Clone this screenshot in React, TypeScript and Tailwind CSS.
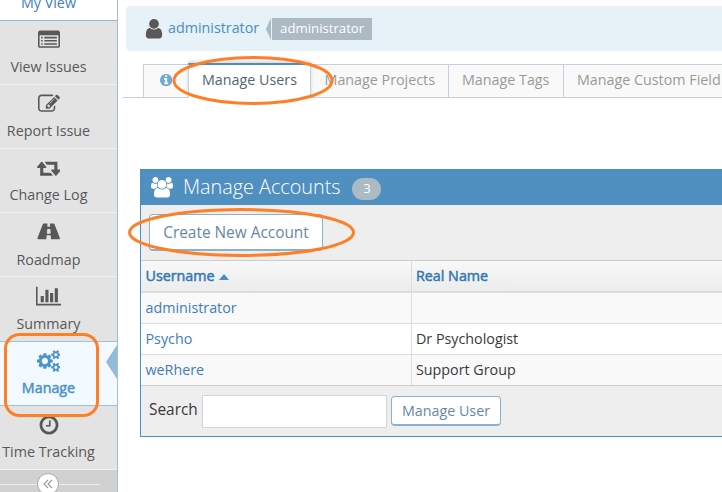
import type { ReactNode } from "react";

type GlyphProps = { d: string; box: string; className: string };

function Glyph({ d, box, className }: GlyphProps) {
  return (
    <svg viewBox={box} className={`block shrink-0 ${className}`} fill="currentColor" aria-hidden="true">
      <path d={d} />
    </svg>
  );
}

const LIST_ALT =
  "M256 1152h128v128h-128zM256 896h128v128h-128zM256 640h128v128h-128zM512 1152h1024v128h-1024zM512 896h1024v128h-1024zM512 640h1024v128h-1024zM1664 1376v-832q0-13-9.500-22.500t-22.500-9.500h-1472q-13 0-22.500 9.500t-9.500 22.500v832q0 13 9.500 22.500t22.500 9.500h1472q13 0 22.500-9.500t9.500-22.500zM1792 288v1088q0 66-47 113t-113 47h-1472q-66 0-113-47t-47-113v-1088q0-66 47-113t113-47h1472q66 0 113 47t47 113z";
const PENCIL =
  "M888 1184l116-116-152-152-116 116v56h96v96h56zm440-720q-16-16-33 1l-350 350q-17 17-1 33t33-1l350-350q17-17 1-33zm80 594v190q0 119-84.5 203.5t-203.5 84.5h-832q-119 0-203.5-84.5t-84.5-203.5v-832q0-119 84.5-203.5t203.5-84.5h832q63 0 117 25 15 7 18 23 3 17-9 29l-49 49q-14 14-32 8-23-6-45-6h-832q-66 0-113 47t-47 113v832q0 66 47 113t113 47h832q66 0 113-47t47-113v-126q0-13 9-22l64-64q15-15 35-7t20 29zm-96-738l288 288-672 672h-288v-288zm444 132l-92 92-288-288 92-92q28-28 68-28t68 28l152 152q28 28 28 68t-28 68z";
const RETWEET =
  "M1280 1504q0 13-9.5 22.5t-22.5 9.5h-960q-8 0-13.5-2t-9-7-5.5-8-3-11.5-1-11.5v-600h-192q-26 0-45-19t-19-45q0-24 15-41l320-384q19-22 49-22t49 22l320 384q15 17 15 41 0 26-19 45t-45 19h-192v384h576q16 0 25 11l160 192q7 10 7 21zm640-416q0 24-15 41l-320 384q-20 23-49 23t-49-23l-320-384q-15-17-15-41 0-26 19-45t45-19h192v-384h-576q-16 0-25-12l-160-192q-7-9-7-20 0-13 9.5-22.5t22.5-9.5h960q8 0 13.5 2t9 7 5.5 8 3 11.5 1 11.5v600h192q26 0 45 19t19 45z";
const ROAD =
  "M1111 1004v-4l-24-320q-1-13-11-22.5t-23-9.5h-186q-13 0-23 9.5t-11 22.5l-24 320v4q-1 12 8 20t21 8h244q12 0 21-8t8-20zm749 407q0 73-46 73h-704q13 0 22-9.5t8-22.5l-20-256q-1-13-11-22.5t-23-9.5h-272q-13 0-23 9.5t-11 22.5l-20 256q-1 13 8 22.5t22 9.500h-704q-46 0-46-73 0-54 26-116l417-1044q8-19 26-33t38-14h339q-13 0-23 9.5t-11 22.5l-15 192q-1 14 8 23t22 9h166q13 0 22-9t8-23l-15-192q-1-13-11-22.5t-23-9.500h339q20 0 38 14t26 33l417 1044q26 62 26 116z";
const BARS =
  "M640 896v512h-256v-512h256zm384-512v1024h-256v-1024h256zm1024 1152v128h-2048v-1536h128v1408h1920zm-640-896v768h-256v-768h256zm384-384v1152h-256v-1152h256z";
const COGS =
  "M896 896q0-106-75-181t-181-75-181 75-75 181 75 181 181 75 181-75 75-181zm768 512q0-52-38-90t-90-38-90 38-38 90q0 53 37.5 90.5t90.5 37.5 90.5-37.5 37.5-90.5zm0-1024q0-52-38-90t-90-38-90 38-38 90q0 53 37.5 90.5t90.5 37.5 90.5-37.5 37.5-90.5zm-384 421v185q0 10-7 19.5t-16 10.5l-155 24q-11 35-32 76 34 48 90 115 7 11 7 20 0 12-7 19-23 30-82.5 89.5t-78.5 59.5q-11 0-21-7l-115-90q-37 19-77 31-11 108-23 155-7 24-30 24h-186q-11 0-20-7.5t-10-17.5l-23-153q-34-10-75-31l-118 89q-7 7-20 7-11 0-21-8-144-133-144-160 0-9 7-19 10-14 41-53t47-61q-23-44-35-82l-152-24q-10-1-17-9.5t-7-19.5v-185q0-10 7-19.5t16-10.5l155-24q11-35 32-76-34-48-90-115-7-11-7-20 0-12 7-20 22-30 82-89t79-59q11 0 21 7l115 90q34-18 77-32 11-108 23-154 7-24 30-24h186q11 0 20 7.5t10 17.5l23 153q34 10 75 31l118-89q8-7 20-7 11 0 21 8 144 133 144 160 0 8-7 19-12 16-42 54t-45 60q23 48 34 82l152 23q10 2 17 10.5t7 19.5zm640 533v140q0 16-149 31-12 27-30 52 51 113 51 138 0 4-4 7-122 71-124 71-8 0-46-47t-52-68q-20 2-30 2t-30-2q-14 21-52 68t-46 47q-2 0-124-71-4-3-4-7 0-25 51-138-18-25-30-52-149-15-149-31v-140q0-16 149-31 13-29 30-52-51-113-51-138 0-4 4-7 4-2 35-20t59-34 30-16q8 0 46 46.5t52 67.5q20-2 30-2t30 2q51-71 92-112l6-2q4 0 124 70 4 3 4 7 0 25-51 138 17 23 30 52 149 15 149 31zm0-1024v140q0 16-149 31-12 27-30 52 51 113 51 138 0 4-4 7-122 71-124 71-8 0-46-47t-52-68q-20 2-30 2t-30-2q-14 21-52 68t-46 47q-2 0-124-71-4-3-4-7 0-25 51-138-18-25-30-52-149-15-149-31v-140q0-16 149-31 13-29 30-52-51-113-51-138 0-4 4-7 4-2 35-20t59-34 30-16q8 0 46 46.5t52 67.5q20-2 30-2t30 2q51-71 92-112l6-2q4 0 124 70 4 3 4 7 0 25-51 138 17 23 30 52 149 15 149 31z";
const CLOCK =
  "M1024 544v448q0 14-9 23t-23 9h-320q-14 0-23-9t-9-23v-64q0-14 9-23t23-9h224v-352q0-14 9-23t23-9h64q14 0 23 9t9 23zm416 352q0-148-73-273t-198-198-273-73-273 73-198 198-73 273 73 273 198 198 273 73 273-73 198-198 73-273zm224 0q0 209-103 385.5t-279.5 279.5-385.5 103-385.5-103-279.5-279.5-103-385.5 103-385.5 279.5-279.5 385.5-103 385.5 103 279.5 279.5 103 385.5z";
const USER =
  "M1536 1399q0 109-62.5 187t-150.5 78h-854q-88 0-150.5-78t-62.5-187q0-85 8.5-160.5t31.5-152 58.5-131 94-89 134.5-34.5q131 128 313 128t313-128q76 0 134.5 34.5t94 89 58.5 131 31.5 152 8.5 160.5zm-256-887q0 159-112.5 271.5t-271.5 112.5-271.5-112.5-112.5-271.5 112.5-271.5 271.5-112.5 271.5 112.5 112.5 271.5z";
const USERS =
  "M593 896q-162 5-265 128h-134q-82 0-138-40.5t-56-118.5q0-353 124-353 6 0 43.5 21t97.5 42.5 119 21.5q67 0 133-23-5 37-5 66 0 143 81 256zm1071 637q0 120-73 189.5t-194 69.500h-874q-121 0-194-69.500t-73-189.5q0-53 3.5-103.5t14-109 26.5-108.5 43-97.5 62-81 85.5-53.5 111.5-20q10 0 43 21.5t73 48 107 48 135 21.5 135-21.5 107-48 73-48 43-21.5q61 0 111.5 20t85.5 53.5 62 81 43 97.5 26.5 108.5 14 109 3.5 103.5zm-1024-1277q0 106-75 181t-181 75-181-75-75-181 75-181 181-75 181 75 75 181zm704 384q0 159-112.5 271.5t-271.5 112.5-271.5-112.5-112.5-271.5 112.5-271.5 271.5-112.5 271.5 112.5 112.5 271.5zm576 225q0 78-56 118.5t-138 40.5h-134q-103-123-265-128 81-113 81-256 0-29-5-66 66 23 133 23 59 0 119-21.5t97.5-42.5 43.5-21q124 0 124 353zm-128-609q0 106-75 181t-181 75-181-75-75-181 75-181 181-75 181 75 75 181z";
const INFO =
  "M1152 1376v-160q0-14-9-23t-23-9h-96v-512q0-14-9-23t-23-9h-320q-14 0-23 9t-9 23v160q0 14 9 23t23 9h96v320h-96q-14 0-23 9t-9 23v160q0 14 9 23t23 9h448q14 0 23-9t9-23zm-128-896v-160q0-14-9-23t-23-9h-192q-14 0-23 9t-9 23v160q0 14 9 23t23 9h192q14 0 23-9t9-23zm640 416q0 209-103 385.5t-279.5 279.5-385.5 103-385.5-103-279.5-279.5-103-385.5 103-385.5 279.5-279.5 385.5-103 385.5 103 279.5 279.5 103 385.5z";

function NavItem({
  label,
  children,
  className = "h-16 border-[#f3f3f3]",
  gap = "mt-1.5",
}: {
  label: string;
  children: ReactNode;
  className?: string;
  gap?: string;
}) {
  return (
    <li className={`border-b bg-[#e3e3e3] text-[#585858] ${className}`}>
      <div className="flex w-[97px] flex-col items-center pt-[7px]">
        <div className="flex h-[23px] items-center">{children}</div>
        <span className={`leading-5 whitespace-nowrap ${gap}`}>{label}</span>
      </div>
    </li>
  );
}

function Sidebar() {
  return (
    <nav className="h-full w-[118px] shrink-0 overflow-hidden border-r border-[#9fbfdb] bg-[#d1d1d1]">
      <ul>
        <li className="flex h-[21px] w-full items-end border-b border-[#8fbcdc] bg-white">
          <span className="mb-[7px] w-[97px] text-center leading-5 text-[#4180bf]">My View</span>
        </li>
        <NavItem label="View Issues">
          <Glyph d={LIST_ALT} box="0 0 1792 1792" className="mt-px h-[22px] w-[22px]" />
        </NavItem>
        <NavItem label="Report Issue">
          <Glyph d={PENCIL} box="0 0 1792 1792" className="h-[22px] w-[22px]" />
        </NavItem>
        <NavItem label="Change Log">
          <Glyph d={RETWEET} box="0 0 1920 1792" className="h-[22px] w-[23.600px]" />
        </NavItem>
        <NavItem label="Roadmap" gap="mt-[7px]">
          <Glyph d={ROAD} box="0 0 1920 1792" className="mt-px h-[22px] w-[23.600px]" />
        </NavItem>
        <NavItem label="Summary" className="h-[65px] border-[#9dc1dc]" gap="mt-[7px]">
          <Glyph d={BARS} box="0 0 2048 1792" className="mt-px h-[22px] w-[25px]" />
        </NavItem>
        <li className="flex h-16 items-center justify-between border-b border-[#9dc1dc] bg-[#f2f9ff] text-[#4b93c9]">
          <div className="flex h-full w-[97px] flex-col items-center pt-[7px]">
            <div className="flex h-[23px] items-center">
              <Glyph d={COGS} box="0 0 1920 1792" className="h-[22px] w-[23.600px]" />
            </div>
            <span className="mt-1.5 leading-5 [-webkit-text-stroke:0.500px_#4b93c9]">Manage</span>
          </div>
          <svg viewBox="0 0 11 34" className="mb-6 h-[34px] w-[11px]" aria-hidden="true">
            <path d="M11 0V34L0 17Z" fill="#92bbd9" />
          </svg>
        </li>
        <NavItem label="Time Tracking">
          <Glyph d={CLOCK} box="0 0 1792 1792" className="h-[22px] w-[22px]" />
        </NavItem>
      </ul>
      <div className="flex w-[100px] items-center pt-[3px]">
        <div className="h-px flex-1 bg-[#eeeeee]" />
        <div className="flex h-[22px] w-[22px] items-center justify-center rounded-full border border-[#aaaaaa] bg-white">
          <svg viewBox="0 0 10 10" className="h-2.5 w-2.5" fill="none" stroke="#999999" strokeWidth="1.1" aria-hidden="true">
            <path d="M5 1L1 5L5 9M9 1L5 5L9 9" />
          </svg>
        </div>
        <div className="h-px w-[41px] bg-[#eeeeee]" />
      </div>
    </nav>
  );
}

function Tabs() {
  return (
    <div className="ml-[5px] flex h-[38px] w-[700px] shrink-0 border-b border-[#c5d0dc] pl-5 text-[#999999]">
      <div className="mt-1 flex h-[33px] w-[45px] items-center justify-center border-t border-l border-[#c5d0dc] bg-[#f9f9f9] pb-0.5">
        <Glyph d={INFO} box="0 0 1792 1792" className="h-[14.300px] w-[14.300px] text-[#71a8d3]" />
      </div>
      <div className="relative mt-[3px] flex h-[35px] w-[123px] items-center justify-center border-x border-t-2 border-x-[#c5d0dc] border-t-[#4c8fbd] bg-white pb-1 text-[#576373] shadow-[0_-2px_3px_rgba(0,0,0,0.15)]">
        Manage Users
      </div>
      <div className="mt-1 flex h-[33px] w-[138px] items-center justify-end border-t border-r border-[#c5d0dc] bg-[#f9f9f9] pr-[13px] pb-0.5 whitespace-nowrap">
        Manage Projects
      </div>
      <div className="mt-1 flex h-[33px] w-[115px] items-center border-t border-r border-[#c5d0dc] bg-[#f9f9f9] pb-0.5 pl-[13px] whitespace-nowrap">
        Manage Tags
      </div>
      <div className="mt-1 flex h-[33px] flex-1 items-center border-t border-[#c5d0dc] bg-[#f9f9f9] pb-0.5 pl-[13px] whitespace-nowrap">
        Manage Custom Field
      </div>
    </div>
  );
}

const ACCOUNTS = [
  { user: "administrator", name: "", row: "bg-[#f9f9f9] border-[#dddddd]" },
  { user: "Psycho", name: "Dr Psychologist", row: "bg-white border-[#dddddd]" },
  { user: "weRhere", name: "Support Group", row: "bg-[#f9f9f9] border-[#cccccc]" },
];

function Accounts() {
  return (
    <section className="mt-[71px] ml-[22px] flex h-[268px] w-[620px] shrink-0 flex-col border border-[#4c8fc1] bg-[#eeeeee]">
      <header className="flex h-[35px] shrink-0 items-center bg-[#4f90c1] pl-2.5 text-white">
        <Glyph d={USERS} box="0 0 1920 1792" className="h-[20.500px] w-[22px]" />
        <h4 className="ml-2.5 pb-0.5 text-[19.800px] font-light whitespace-nowrap">Manage Accounts</h4>
        <span className="mt-[3px] ml-3 flex h-[22px] w-[29px] items-center justify-center rounded-full bg-[#abbac3] text-[13.200px]">3</span>
      </header>
      <div className="flex h-14 shrink-0 items-start border-b border-[#cccccc] pt-[9px] pl-2">
        <button className="h-[37px] w-[174px] rounded border border-b-2 border-[#8bb0d0] bg-white pt-0.5 text-[15.400px] whitespace-nowrap text-[#6688a6]">
          Create New Account
        </button>
      </div>
      <div className="flex h-8 shrink-0 border-b-2 border-[#dddddd] bg-linear-to-b from-[#f8f8f8] to-[#ececec] leading-[30px] text-[#3377b5] [-webkit-text-stroke:0.500px_#3377b5]">
        <div className="flex w-[271px] items-center border-r border-[#dddddd] pl-[4.500px]">
          Username
          <span className="mt-0.5 ml-1 border-x-[5.500px] border-b-[6px] border-x-transparent border-b-[#478fca]" />
        </div>
        <div className="pl-1">Real Name</div>
      </div>
      {ACCOUNTS.map((a) => (
        <div key={a.user} className={`flex h-[31px] shrink-0 border-b leading-[30px] ${a.row}`}>
          <div className="w-[271px] border-r border-[#dddddd] pl-[4.500px] text-[#3f7db8]">{a.user}</div>
          <div className="pl-1 text-[#393939]">{a.name}</div>
        </div>
      ))}
      <div className="flex items-start pt-[9px] pl-2 text-[#393939]">
        <span className="mt-0.5 w-[53px] text-[15.400px] leading-[26px]">Search</span>
        <div className="h-[33px] w-[185px] border border-[#d5d5d5] bg-white" />
        <button className="mt-px ml-1 h-[30px] w-[110px] rounded border border-b-2 border-[#8bb0d0] bg-white whitespace-nowrap text-[#6688a6]">
          Manage User
        </button>
      </div>
    </section>
  );
}

export default function App() {
  return (
    <div className="relative flex h-[492px] w-[722px] overflow-hidden bg-white font-['Open_Sans',sans-serif] text-[14.300px]">
      <Sidebar />
      <main className="flex min-w-0 flex-1 flex-col overflow-hidden">
        <div className="mt-1.5 ml-2 flex h-[45px] w-[640px] shrink-0 rounded bg-[#e6f1f8] pt-3 pl-[19px]">
          <Glyph d={USER} box="192 128 1408 1536" className="mt-px h-[19.500px] w-[18px] text-[#585858]" />
          <span className="ml-[5px] h-5 leading-5 text-[#4c8fbd]">administrator</span>
          <svg viewBox="0 0 6 22" className="ml-[7px] h-[22px] w-1.5" aria-hidden="true">
            <path d="M5 0V22L0 11Z" fill="#abbac3" />
          </svg>
          <span className="flex h-[22px] w-[100px] items-center justify-center bg-[#abbac3] text-[13.200px] text-white">administrator</span>
        </div>
        <div className="mt-[9px]">
          <Tabs />
        </div>
        <Accounts />
      </main>
      <svg viewBox="0 0 722 492" className="pointer-events-none absolute inset-0 h-full w-full" fill="none" stroke="#ff7f27" strokeWidth="3" aria-hidden="true">
        <ellipse cx="253" cy="80.500" rx="79" ry="23" />
        <ellipse cx="241.500" cy="232.500" rx="112" ry="23" />
        <rect x="5.500" y="334.500" width="92" height="81" rx="14" />
      </svg>
    </div>
  );
}
